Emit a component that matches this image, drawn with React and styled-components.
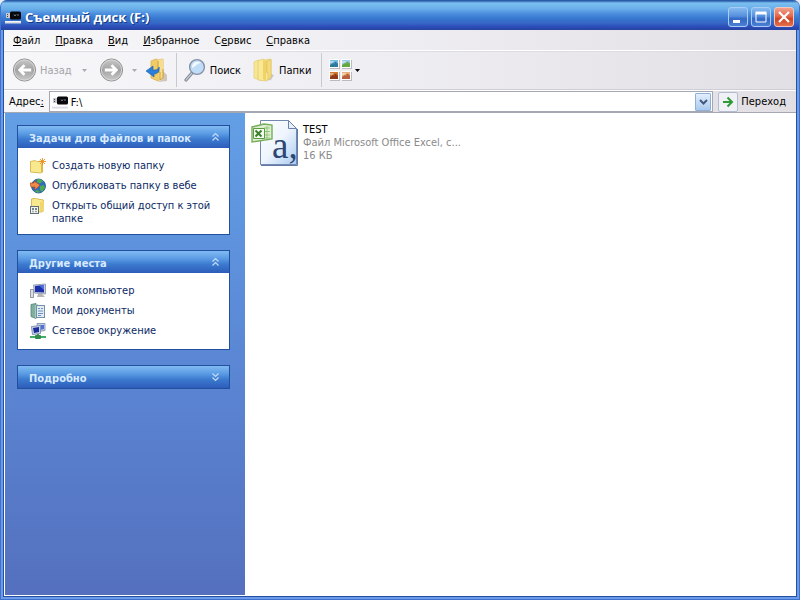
import React from "react";
import styled, { createGlobalStyle } from "styled-components";

const GlobalStyle = createGlobalStyle`
  *, *::before, *::after { box-sizing: border-box; }
  body {
    margin: 0;
    background: #e4ebf6;
    font-family: "DejaVu Sans Condensed", "DejaVu Sans", sans-serif;
    font-size: 11px;
    line-height: 13px;
    color: #000;
  }
  button, input { font: inherit; color: inherit; }
  button { border: 0; padding: 0; margin: 0; background: none; }
  svg { display: block; flex: none; }
`;

const Window = styled.div`
  min-height: 100vh;
  display: flex;
  flex-direction: column;
  padding: 0 2px 2px;
  border-radius: 7px 7px 0 0;
  overflow: hidden;
  background: #6d9bea;
  border: solid #3f72cc;
  border-width: 0 1px 1px;
`;

const TitleBar = styled.header`
  height: 30px;
  margin: 0 -2px;
  padding: 3px 5px 0 4px;
  display: flex;
  align-items: center;
  gap: 4px;
  background: linear-gradient(
    #24559f 0, #2f62b0 1px, #7cc0f0 3px, #68aeea 9px, #4a8bdc 14px,
    #387ad0 18px, #3567c6 23px, #2c4bb8 27px, #26449f 30px
  );
`;

const Title = styled.h1`
  flex: 1;
  margin: 0;
  padding-top: 1px;
  font-family: "Open Sans", "Noto Sans", sans-serif;
  font-size: 13px;
  line-height: 18px;
  font-weight: 700;
  color: #fff;
  text-shadow: 1px 1px 0 #173a86;
`;

const CaptionButtons = styled.div`
  display: flex;
  gap: 3px;
`;

const CaptionButton = styled.button`
  width: 20px;
  height: 20px;
  display: grid;
  place-items: center;
  border: 1px solid ${(p) => (p.$close ? "#f0c8c0" : "#a8ccf4")};
  border-radius: 3px;
  background: ${(p) =>
    p.$close
      ? "linear-gradient(#f0a08c, #e2694c 45%, #cf4422 60%, #e4704c)"
      : "linear-gradient(#86baf0, #5590dc 45%, #3468c4 60%, #4a80d4)"};
`;

const Client = styled.div`
  flex: 1;
  display: flex;
  flex-direction: column;
  border: solid #2450a4;
  border-width: 0 1px 1px;
  background: #fff;
`;

const Chrome = styled.div`
  background: linear-gradient(90deg, #f7f7fa, #eeedf1 50%, #e2dfe4);
`;

const MenuBar = styled.nav`
  height: 21px;
  padding: 1px 9px 0;
  display: flex;
  align-items: center;
  gap: 15px;
  border-bottom: 1px solid #fff;
`;

const MenuItem = styled.button`
  white-space: nowrap;
`;

const ToolBar = styled.div`
  height: 39px;
  padding: 0 8px 1px;
  display: flex;
  align-items: center;
  border-top: 1px solid #dddce2;
  border-bottom: 1px solid #cfced6;
`;

const ToolButton = styled.button`
  display: flex;
  align-items: center;
  gap: ${(p) => p.$gap || 4}px;
  margin-right: ${(p) => p.$after || 0}px;
  color: ${(p) => (p.disabled ? "#a3a3a8" : "#000")};
`;

const Separator = styled.span`
  width: 1px;
  height: 34px;
  margin: 0 7px 0 6px;
  background: #c9c9d0;
`;

const AddressBar = styled.form`
  height: 23px;
  padding: 0 10px 0 5px;
  display: flex;
  align-items: center;
  border-top: 1px solid #fff;
  border-bottom: 1px solid #a5a8b2;
`;

const AddressLabel = styled.label`
  margin-right: 5px;
`;

const AddressField = styled.div`
  flex: 1;
  height: 21px;
  display: flex;
  align-items: center;
  padding: 0 1px 0 2px;
  gap: 3px;
  background: #fff;
  border: 1px solid #a5a8b2;
`;

const AddressInput = styled.input`
  flex: 1;
  min-width: 0;
  border: 0;
  padding: 1px 0 0;
  background: none;
  outline: none;
`;

const DropButton = styled.button`
  width: 16px;
  height: 18px;
  display: grid;
  place-items: center;
  border: 1px solid #8fb0d8;
  border-radius: 1px;
  background: linear-gradient(#e4effc, #a9c9ee);
`;

const GoButton = styled.button`
  display: flex;
  align-items: center;
  gap: 3px;
  margin-left: 5px;
`;

const GoIcon = styled.span`
  width: 20px;
  height: 20px;
  display: grid;
  place-items: center;
  border: 1px solid #b4bccd;
  border-radius: 2px;
  background: #eff1f7;
`;

const Body = styled.div`
  flex: 1;
  display: flex;
  border-left: 1px solid #fff;
  border-bottom: 1px solid #fff;
`;

const Sidebar = styled.aside`
  width: 240px;
  flex: none;
  padding: 12px 15px 12px 12px;
  display: flex;
  flex-direction: column;
  gap: 15px;
  background: linear-gradient(#639fe5, #5c8cd9 40%, #5470be);
`;

const Panel = styled.section`
  border: 1px solid #22509f;
  background: #fff;
`;

const PanelHeader = styled.button`
  width: 100%;
  height: 22px;
  padding: 3px 9px 0 11px;
  display: flex;
  align-items: center;
  justify-content: space-between;
  background: linear-gradient(#80bbf2, #5b9be4 35%, #3c7bcf 60%, #2d5cba);
  color: #d8eaff;
  font-weight: 700;
`;

const TaskList = styled.ul`
  list-style: none;
  margin: 0;
  padding: 11px 12px 9px;
  display: flex;
  flex-direction: column;
  gap: 4px;
`;

const Task = styled.a`
  min-height: 16px;
  display: flex;
  gap: 6px;
  color: #0b2a66;
  text-decoration: none;
`;

const TaskIcon = styled.span`
  width: 16px;
  height: 13px;
  flex: none;
  display: flex;
  align-items: center;
`;

const Files = styled.main`
  flex: 1;
  min-width: 0;
  padding: 6px;
`;

const File = styled.a`
  width: 212px;
  display: flex;
  gap: 4px;
  color: #000;
  text-decoration: none;
`;

const FileInfo = styled.span`
  min-width: 0;
  padding-top: 4px;
  display: flex;
  flex-direction: column;
`;

const FileLine = styled.span`
  color: ${(p) => (p.$muted ? "#8a8a8a" : "#000")};
  white-space: nowrap;
`;

const DriveIcon = () => (
  <svg width="16" height="16" viewBox="0 0 16 16" aria-hidden="true">
    <rect x="0" y="12" width="16" height="2.5" fill="#d9dce2" />
    <rect x="0" y="12" width="16" height="1" fill="#f4f5f7" />
    <rect x="1" y="4" width="5" height="5" fill="#c8cad0" />
    <path d="M2 5.500h1M2 7.500h1" stroke="#444" />
    <rect x="5" y="2.500" width="11" height="8" rx="1.500" fill="#08090c" />
    <path d="M9 5.500l1 1.500 1-1.500M12 6h2" stroke="#a9aeb8" strokeWidth=".7" fill="none" />
  </svg>
);

const CircleArrow = ({ flip }) => (
  <svg width="25" height="26" viewBox="0 0 26 26" aria-hidden="true">
    <defs>
      <linearGradient id={flip ? "discF" : "discB"} x2="0" y2="1">
        <stop offset="0" stopColor="#c9c9c9" />
        <stop offset=".5" stopColor="#a2a2a2" />
        <stop offset="1" stopColor="#cbcbcb" />
      </linearGradient>
    </defs>
    <circle cx="13" cy="13" r="11.500" fill={`url(#${flip ? "discF" : "discB"})`} stroke="#8c8c8c" />
    <circle cx="13" cy="13" r="10.500" fill="none" stroke="#d6d6d6" />
    <path
      transform={flip ? "rotate(180 13 13)" : undefined}
      d="M6 13l6-6 2 2-2.500 2.500H20v3h-8.500L14 17l-2 2z"
      fill="#fff"
    />
  </svg>
);

const Caret = ({ color }) => (
  <svg width="5" height="3" viewBox="0 0 5 3" aria-hidden="true">
    <path d="M0 0h5L2.500 3z" fill={color} />
  </svg>
);

const FolderUpIcon = () => (
  <svg width="24" height="26" viewBox="0 0 24 26" aria-hidden="true">
    <path d="M17 14l4 4v6l-9 1 5-3z" fill="#a99a80" opacity=".5" />
    <path d="M5 4l5-2 2 1 5-1v19l-5 3-7-3z" fill="#f0cc68" stroke="#dbb055" strokeWidth=".8" />
    <path d="M12 3l5-1v19l-4 3z" fill="#f8dd8c" />
    <path d="M12 4v11h2v8l3-2v-9" fill="none" stroke="#cf9f3c" />
    <path d="M13 10c1 4-1 7-5 7v3l-8-6 7-5v4c3 0 5 0 6-3z" fill="#2c7fd8" stroke="#1b5fae" strokeWidth=".6" />
  </svg>
);

const SearchIcon = () => (
  <svg width="22" height="25" viewBox="0 0 22 25" aria-hidden="true">
    <path d="M8 15l-6 7" stroke="#7b8590" strokeWidth="3.200" strokeLinecap="round" />
    <path d="M8 15l-6 7" stroke="#c3cad2" strokeWidth="1.200" strokeLinecap="round" />
    <circle cx="13" cy="9" r="7.400" fill="#bfdcf8" stroke="#8590a0" strokeWidth="1.400" />
    <path d="M8 8a5.500 5.500 0 0 1 9-3c-3 0-5 3-9 5z" fill="#f2f9ff" />
  </svg>
);

const FoldersIcon = () => (
  <svg width="22" height="24" viewBox="0 0 22 24" aria-hidden="true">
    <path d="M15 15l6 2-3 5-7 1z" fill="#9b9b9b" opacity=".45" />
    <path d="M1 4l4-2 3 1v19l-7-2z" fill="#f7e794" stroke="#e3cb70" strokeWidth=".7" />
    <path d="M5 3l5-2 2 1 6-1v18l-5 4-8-1z" fill="#f9e894" stroke="#e0c566" strokeWidth=".7" />
    <path d="M10 2v19l3 2v-8l2-1V3z" fill="#f0d268" />
    <path d="M14 3l4-1v17l-3 3v-7h-1z" fill="#f5dc7a" stroke="#ddbd55" strokeWidth=".6" />
  </svg>
);

const THUMBNAILS = [
  [0, 0, "#79bbe0", "#2f7a9c"],
  [12, 0, "#9ccbe8", "#62a83c"],
  [0, 12, "#d07a30", "#8e3b1c"],
  [12, 12, "#eab07c", "#b8603c"],
];

const ViewsIcon = () => (
  <svg width="23" height="22" viewBox="0 0 23 22" aria-hidden="true">
    {THUMBNAILS.map(([x, y, back, front]) => (
      <g key={`${x}-${y}`} transform={`translate(${x} ${y})`}>
        <rect x="1" y="1" width="10" height="9" fill="#b9bbc1" />
        <rect width="10" height="9" fill="#fff" />
        <rect x="1" y="1" width="8" height="7" fill={back} />
        <path d="M1 8V6l3-2 2 1 3-1v4z" fill={front} />
        <path d="M1 2h4l-2 2H1z" fill="#fff" opacity=".45" />
        <circle cx="6.500" cy="4" r="1.300" fill={front} />
      </g>
    ))}
  </svg>
);

const Chevrons = ({ down }) => (
  <svg width="9" height="13" viewBox="0 0 9 13" aria-hidden="true">
    <path
      d={down ? "M1.500 1.500l3 3 3-3M1.500 5.500l3 3 3-3" : "M1.500 4.500l3-3 3 3M1.500 8.500l3-3 3 3"}
      fill="none"
      stroke="#c4dcfa"
      strokeWidth="1.200"
    />
  </svg>
);

const NewFolderIcon = () => (
  <svg width="16" height="16" viewBox="0 0 16 16" aria-hidden="true">
    <path d="M.5 3.500l5-1 1 1 6-.5v11l-2 1-10-1z" fill="#f8e88e" stroke="#d9bb55" />
    <path d="M11 6l2-1v9l-2 1z" fill="#dfb944" />
    <path d="M12.500 0v7M9 3.500h7M10 1l5 5M15 1l-5 5" stroke="#e98f20" strokeWidth=".9" />
  </svg>
);

const GlobeIcon = () => (
  <svg width="16" height="16" viewBox="0 0 16 16" aria-hidden="true">
    <circle cx="8.500" cy="8" r="7" fill="#2f6dc0" stroke="#21508f" strokeWidth=".8" />
    <path d="M7 1.500c3-1 5 0 6 2l-3 2-3-1zM10 8l4-1 1 3-3 4-2-2z" fill="#4caa50" />
    <path d="M4 13l4-1 2 2-2 1z" fill="#4caa50" />
    <path d="M0 5h4V3l6 4-5 5v-3H1z" fill="#ee8a4a" stroke="#b9481b" strokeWidth=".7" />
  </svg>
);

const ShareFolderIcon = () => (
  <svg width="16" height="16" viewBox="0 0 16 16" aria-hidden="true">
    <path d="M1.500 1l5-1 1 1 6 1v11l-2 1h-10z" fill="#f8e88e" stroke="#d9bb55" />
    <path d="M10 4l4-1v10l-4 1z" fill="#efd670" />
    <rect x=".5" y="8.500" width="8" height="7" fill="#f4f4f0" stroke="#5f6f76" />
    <path d="M2 11h2M5 11h2M2.500 13.500h1M5.500 13.500h1" stroke="#49616a" strokeWidth="1.300" />
  </svg>
);

const ComputerIcon = () => (
  <svg width="16" height="16" viewBox="0 0 16 16" aria-hidden="true">
    <rect x=".5" y="6.500" width="3" height="8" fill="#dcdde2" stroke="#9b9ca6" />
    <path d="M3.500 2l12-1v10l-11-1z" fill="#c6cddd" stroke="#99a2b8" />
    <path d="M5 3l9-1v7.500L5 9z" fill="#1d2fa8" />
    <path d="M9 2.500l5-.5v5z" fill="#4d6fe0" />
    <path d="M8 11h4l3 3H7z" fill="#b9b6b2" />
  </svg>
);

const DocumentsIcon = () => (
  <svg width="16" height="16" viewBox="0 0 16 16" aria-hidden="true">
    <path d="M1 1.500l5-1v15l-5-2z" fill="#7fb09f" stroke="#4f8273" strokeWidth=".8" />
    <path d="M5 2l3-1v14H5z" fill="#a5cbbd" />
    <rect x="6.500" y="2.500" width="8" height="12" fill="#e2ecf4" stroke="#7490a6" />
    <path d="M8 5.500h2M11 5.500h2M8 8h5M8 10.500h5M8 12.500h3" stroke="#5f86b8" strokeWidth=".9" />
  </svg>
);

const NetworkIcon = () => (
  <svg width="16" height="16" viewBox="0 0 16 16" aria-hidden="true">
    <path d="M7 .5h8v7l-7 1z" fill="#c5cfe4" stroke="#8d9cba" />
    <path d="M9 2h5v4l-4 1z" fill="#4f70d8" />
    <path d="M1.500 3.500l9-1v8l-8 1z" fill="#c9d2e6" stroke="#8492b2" />
    <path d="M3 5l6-1v5l-5 1z" fill="#1b2c9e" />
    <path d="M7 11h2v2H7z" fill="#3b9c58" />
    <path d="M0 13h16v2H0z" fill="#43ad62" />
    <rect x="5" y="12" width="6" height="4" rx="1" fill="#2f8c4d" />
  </svg>
);

const CsvFileIcon = () => (
  <svg width="48" height="48" viewBox="0 0 48 48" aria-hidden="true">
    <defs>
      <linearGradient id="sheet" x1="0" y1="0" x2="1" y2="1">
        <stop offset="0" stopColor="#fff" />
        <stop offset=".5" stopColor="#eef5fd" />
        <stop offset="1" stopColor="#aacbf2" />
      </linearGradient>
    </defs>
    <path d="M9.500 1.500h28l8 8v36h-36z" fill="url(#sheet)" stroke="#7388b0" />
    <path d="M10 46.500h36.500V10" fill="none" stroke="#6379a6" />
    <path d="M37.500 1.500v8h8z" fill="#e6effa" stroke="#6b7fa8" />
    <path d="M1 8l12-3 8 1v14l-20 3z" fill="#dff0d2" stroke="#76ad5b" strokeWidth="1.400" />
    <path d="M13 9h6M13 12.500h6M13 16h6M13 19h6M16 7v13" stroke="#8fc178" strokeWidth=".9" />
    <path d="M2.500 9.500h11v10h-11z" fill="#f4fbef" stroke="#5c9b42" />
    <path d="M4.500 11.500l6 6M10.500 11.500l-6 6" stroke="#3b7f2c" strokeWidth="2" />
    <text x="21" y="39" fontFamily="Liberation Serif, serif" fontSize="37" fill="#2d4672">
      a,
    </text>
  </svg>
);

const MENU = [["", "Ф", "айл"], ["", "П", "равка"], ["", "В", "ид"], ["", "И", "збранное"], ["С", "е", "рвис"], ["", "С", "правка"]];

const PANELS = [
  {
    title: "Задачи для файлов и папок",
    items: [
      ["Создать новую папку", NewFolderIcon],
      ["Опубликовать папку в вебе", GlobeIcon],
      ["Открыть общий доступ к этой папке", ShareFolderIcon],
    ],
  },
  {
    title: "Другие места",
    items: [
      ["Мой компьютер", ComputerIcon],
      ["Мои документы", DocumentsIcon],
      ["Сетевое окружение", NetworkIcon],
    ],
  },
  { title: "Подробно" },
];

export default function App() {
  return (
    <Window>
      <GlobalStyle />
      <TitleBar>
        <DriveIcon />
        <Title>Съемный диск (F:)</Title>
        <CaptionButtons>
          <CaptionButton aria-label="Свернуть">
            <svg width="18" height="18" viewBox="0 0 18 18"><path d="M4 12h7v3H4z" fill="#fff" /></svg>
          </CaptionButton>
          <CaptionButton aria-label="Развернуть">
            <svg width="18" height="18" viewBox="0 0 18 18">
              <path d="M4 5h10v9H4z" fill="none" stroke="#fff" />
              <path d="M3.500 3.500h11v3h-11z" fill="#fff" />
            </svg>
          </CaptionButton>
          <CaptionButton $close aria-label="Закрыть">
            <svg width="18" height="18" viewBox="0 0 18 18"><path d="M4 4l10 10M14 4L4 14" stroke="#fff" strokeWidth="2.200" /></svg>
          </CaptionButton>
        </CaptionButtons>
      </TitleBar>
      <Client>
        <Chrome>
          <MenuBar>
            {MENU.map(([before, key, after]) => (
              <MenuItem key={before + key + after}>{before}<u>{key}</u>{after}</MenuItem>
            ))}
          </MenuBar>
          <ToolBar>
            <ToolButton disabled $gap={3} $after={10}><CircleArrow />Назад</ToolButton>
            <ToolButton disabled $after={12} aria-label="История назад"><Caret color="#a9a9ae" /></ToolButton>
            <ToolButton disabled $gap={8} $after={9} aria-label="Вперед"><CircleArrow flip /><Caret color="#a9a9ae" /></ToolButton>
            <ToolButton aria-label="Вверх"><FolderUpIcon /></ToolButton>
            <Separator />
            <ToolButton $after={12}><SearchIcon />Поиск</ToolButton>
            <ToolButton $after={4}><FoldersIcon />Папки</ToolButton>
            <Separator />
            <ToolButton $gap={3} aria-label="Вид"><ViewsIcon /><Caret color="#000" /></ToolButton>
          </ToolBar>
          <AddressBar onSubmit={(e) => e.preventDefault()}>
            <AddressLabel htmlFor="address">Адрес<u>:</u></AddressLabel>
            <AddressField>
              <DriveIcon />
              <AddressInput id="address" defaultValue="F:\" />
              <DropButton type="button" aria-label="Список адресов">
                <svg width="9" height="6" viewBox="0 0 9 6"><path d="M1 1l3.500 3.500L8 1" fill="none" stroke="#44597f" strokeWidth="2" /></svg>
              </DropButton>
            </AddressField>
            <GoButton type="submit">
              <GoIcon>
                <svg width="12" height="12" viewBox="0 0 12 12"><path d="M1 6h9M5.500 1.500L10 6l-4.500 4.500" fill="none" stroke="#2f9a35" strokeWidth="2" /></svg>
              </GoIcon>
              Переход
            </GoButton>
          </AddressBar>
        </Chrome>
        <Body>
          <Sidebar>
            {PANELS.map(({ title, items }) => (
              <Panel key={title}>
                <PanelHeader aria-expanded={Boolean(items)}>
                  {title}
                  <Chevrons down={!items} />
                </PanelHeader>
                {items && (
                  <TaskList>
                    {items.map(([label, Icon]) => (
                      <li key={label}>
                        <Task href="#">
                          <TaskIcon><Icon /></TaskIcon>
                          <span>{label}</span>
                        </Task>
                      </li>
                    ))}
                  </TaskList>
                )}
              </Panel>
            ))}
          </Sidebar>
          <Files>
            <File href="#">
              <CsvFileIcon />
              <FileInfo>
                <FileLine>TEST</FileLine>
                <FileLine $muted>Файл Microsoft Office Excel, с...</FileLine>
                <FileLine $muted>16 КБ</FileLine>
              </FileInfo>
            </File>
          </Files>
        </Body>
      </Client>
    </Window>
  );
}
